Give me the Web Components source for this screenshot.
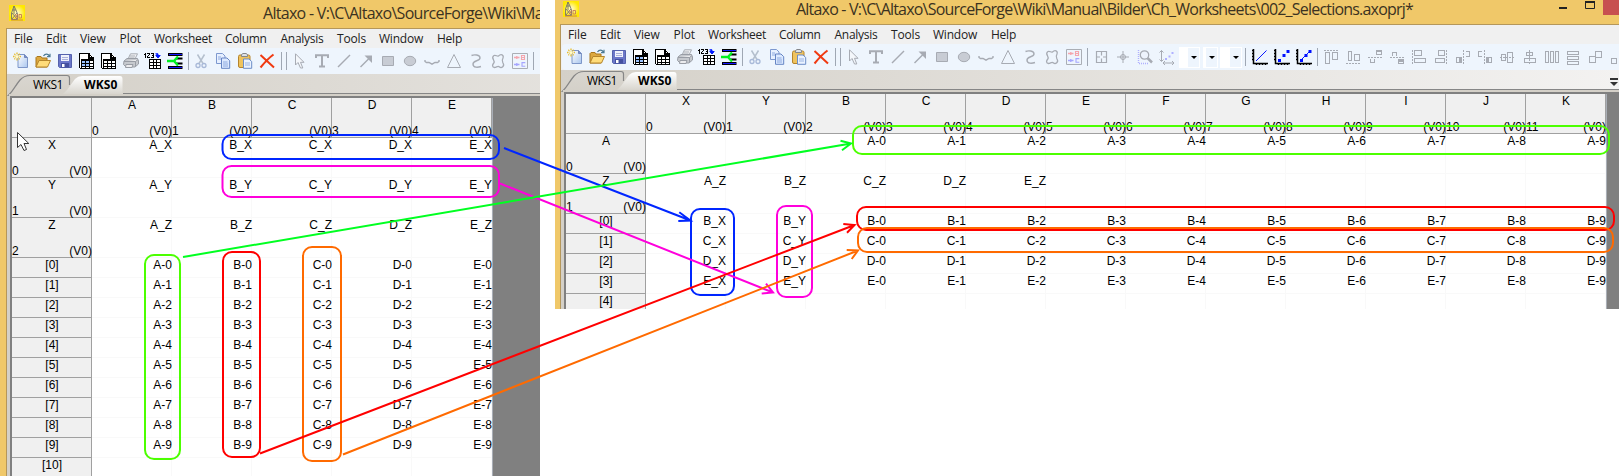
<!DOCTYPE html>
<html lang="en">
<head>
<meta charset="utf-8">
<title>Altaxo worksheets</title>
<style>
html,body{margin:0;padding:0;background:#fff;overflow:hidden}
body{width:1619px;height:476px}
</style>
</head>
<body>
<altaxo-desk></altaxo-desk>
<script>
const define = (name, cls) => customElements.define(name, cls);
const make = (el, html) => { el.attachShadow({mode:'open'}).innerHTML = html; return el.shadowRoot; };

/* Text that is spaced to a given width */
define('fit-text', class extends HTMLElement {
  connectedCallback(){
    if (this.shadowRoot) return;
    make(this, '<style>:host{display:inline-block;white-space:pre}</style><slot></slot>');
    const w = +this.getAttribute('w'), t = this.textContent, cs = getComputedStyle(this);
    const c = document.createElement('canvas').getContext('2d');
    c.font = `${cs.fontWeight} ${cs.fontSize} ${cs.fontFamily}`;
    this.style.letterSpacing = ((w - c.measureText(t).width) / t.length).toFixed(3) + 'px';
    this.style.width = w + 'px';
  }
});

const G = '#a7abb3';
const sheet = (fill) => `<g shape-rendering="crispEdges"><path d="M1 0H10L15 5V16H1Z" fill="#fff"/><path d="M0 0H10V1H1V15H0Z M1 15H15V16H0Z M14 5H15V15H14Z M3 6H14V7H3Z" fill="#000"/><path d="M10 0V5H15M10.5 1.5L14 5" fill="none" stroke="#000" stroke-width="1.2"/><path d="M2 6H15V16H2Z" fill="#000"/><path d="M3 8h3v2h-3z M7 8h3v2h-3z M11 8h3v2h-3z M3 11h3v1.6h-3z M7 11h3v1.6h-3z M11 11h3v1.6h-3z M3 14h3v1.3h-3z M7 14h3v1.3h-3z M11 14h3v1.3h-3z" fill="#fff"/>${fill?'<path d="M3 8h3v2h-3z M7 8h3v2h-3z M3 11h3v2h-3z M7 11h3v2h-3z" fill="#9bc2ff"/>':''}</g>`;
const axes = '<path d="M1.5 0V14.5H16M0 1.5h1M0 4.5h1M0 7.5h1M0 10.5h1M4.5 15v1M7.5 15v1M10.5 15v1M13.5 15v1" fill="none" stroke="#000" stroke-width="1.5"/>';
const ICONS = {
  new: '<defs><linearGradient id="a" x2="1" y2="1"><stop stop-color="#fff"/><stop offset="1" stop-color="#a9c6ef"/></linearGradient></defs><path d="M5 1.5H11.5L14.5 4.5V14.5H5Z" fill="url(#a)" stroke="#7d96c8"/><path d="M11.5 1.5V4.5H14.5" fill="#7a90c8" stroke="#7286bb"/><path d="M4 -.5V7.5M0 3.5H8M1.3.8L6.7 6.2M6.7.8L1.3 6.2" stroke="#e7bd2f" stroke-width="1.3" stroke-dasharray="1.5 .7"/><circle cx="4" cy="3.5" r="1.6" fill="#fffbd0"/>',
  open: '<path d="M1 4.5L2 3.5H6L7 5H12V14H1Z" fill="#dca83f" stroke="#a9771d"/><path d="M1 14L4 7.5H15.5L12.5 14Z" fill="#ffdc7a" stroke="#b5862d"/><path d="M8.5 3C10 .5 13 .5 14.5 3.2M15 .8V3.7H12" fill="none" stroke="#4d7b96" stroke-width="1.2"/>',
  save: '<path d="M1.5 1.5H14.5V14.5H2.5L1.5 13.5Z" fill="#6b77c9" stroke="#5562ad"/><path d="M4 2H12V8H4Z" fill="#f0f2fb"/><path d="M5 4.5H11M5 6.5H11" stroke="#a9b0da"/><path d="M4 10H12V14.5H4Z" fill="#4450a0"/><path d="M5 11H7.5V14H5Z" fill="#fff"/>',
  sheetA: sheet(true), sheetB: sheet(false),
  print: `<path d="M5 6L7.5.8H14.5L12 6M7 3H12M6.3 5H11.5" fill="#f2f3f5" stroke="${G}"/><path d="M1 8L4 5.5H14.5L15.5 8V11L12 14H3L.5 11.5Z" fill="#c6c9ce" stroke="#999da5"/><path d="M1 8.5H12.5L15 6.5M12.5 8.5V13M3 11.5H10L9 14.5H2.5Z" fill="#ececee" stroke="#999da5"/>`,
  num: '<g shape-rendering="crispEdges"><path d="M0 0h1v5h-1zM-1 1h1v1h-1zM2 0h3v1h-3zM4 1h1v1h-1zM3 2h1v1h-1zM2 3h1v2h-1zM3 4h2v1h-2zM6 0h3v1h-3zM8 1h1v3h-1zM7 2h1v1h-1zM6 4h3v1h-3z" fill="#000"/><path d="M4 6H16V16H4Z" fill="#000"/><path d="M5 7h3v2h-3zM9 7h2v2h-2zM12 7h3v2h-3zM5 10h3v2h-3zM9 10h2v2h-2zM12 10h3v2h-3zM5 13h3v2h-3zM9 13h2v2h-2zM12 13h3v2h-3z" fill="#fff"/></g><path d="M10.5 .8H13V3M10.8 2.5H15.2L13 5Z" fill="#0018ff" stroke="#0018ff"/>',
  merge: '<path d="M1 1.5H15.5M1 14.5H15.5" stroke="#000" stroke-width="3"/><path d="M2 1.5H15M2 14.5H15" stroke="#1515ff" stroke-width="1"/><path d="M9 5.5H15.5M9 10.5H15.5" stroke="#000" stroke-width="2"/><path d="M0 8H7L11 3.5M7 8L11 12.5" fill="none" stroke="#00f020" stroke-width="2.4"/>',
  cut: '<path d="M4.5 1.5L10 10.5M11.5 1.5L6 10.5" stroke="#b4bfcd" stroke-width="1.5" fill="none"/><circle cx="5" cy="12.5" r="2" fill="none" stroke="#a8b9d8" stroke-width="1.3"/><circle cx="11" cy="12.5" r="2" fill="none" stroke="#a8b9d8" stroke-width="1.3"/>',
  copy: '<path d="M1.5.5H7.5L10 3V10.5H1.5Z" fill="#e7f0ff" stroke="#7d98cf"/><path d="M6.5 5H12L14.7 7.7V15.3H6.5Z" fill="#dce9ff" stroke="#6685c4"/><path d="M3 4H6M3 6H6M8 9H12.5M8 11H13M8 13H13" stroke="#8eaadf"/>',
  paste: '<rect x="1.5" y="2" width="11.5" height="12.5" rx="1.5" fill="#efc35e" stroke="#b5842c"/><path d="M4.5 3.5V1.5L6 .5H9L10.5 1.5V3.5Z" fill="#dfe2e6" stroke="#85878b"/><path d="M6.5 6H12L14.7 8.5V15.3H6.5Z" fill="#eaf2ff" stroke="#6c8dc7"/><path d="M8 10H13M8 12H13" stroke="#9ab4e2"/>',
  del: '<path d="M1.5 2L15 14.5M14.5 1.5C9 5.5 6 9 1.5 14.5" fill="none" stroke="#f03a12" stroke-width="2"/>',
  arrow: `<path d="M3.5.8V12L6 9.5L8.5 15H10.8L8.5 9.3H12Z" fill="#f4f7fb" stroke="${G}"/>`,
  text: `<path d="M2 5V2.2H14V5M8 2V13.5M5 13.5H11" fill="none" stroke="${G}" stroke-width="2"/>`,
  line: `<path d="M2 14L14 2" stroke="${G}" stroke-width="1.5"/>`,
  larrow: `<path d="M2.5 14L12 4.5" stroke="${G}" stroke-width="1.5"/><path d="M6.5 2.5H14V10Z" fill="${G}"/>`,
  rect: `<path d="M2.5 3.5H13.5V12.5H2.5Z" fill="#c8ccd4" stroke="${G}"/>`,
  oval: `<ellipse cx="8" cy="8" rx="5.7" ry="4.7" fill="#c8ccd4" stroke="${G}"/>`,
  wave: `<path d="M1 7V8.5L2.5 9.5H5L8 11.2L11 9.5H13.5L15 8.5V7" fill="none" stroke="${G}" stroke-width="1.4"/>`,
  tri: `<path d="M8 1.5L14.5 14.5H1.5Z" fill="none" stroke="${G}"/>`,
  curve: `<path d="M3.5 2.5C6 1.5 12 1.5 12 5C12 8.5 5 7 5 11C5 15 10 14.5 13 13.5" fill="none" stroke="${G}" stroke-width="1.4"/>`,
  blob: `<path d="M4 2.5C6 1.5 7 4 8.5 3C11 .5 14 2 13 5C11.5 7.5 12 8 13 10C15 13 11.5 15.5 9.5 14C8 12 6.5 14.5 4.5 14.5C1.5 14 2.5 11.5 3.8 10C5.8 7.5 0 5 4 2.5Z" fill="none" stroke="${G}" stroke-width="1.3"/>`,
  bc: '<path d="M.5.5H15.5V15.5H.5Z" fill="none" stroke="#aaaeb5"/><path d="M2 4.5H7.5M4.8 3V6" stroke="#f5a5ad" stroke-width="1.3"/><path d="M2 11.5H7.5M4.8 10V13" stroke="#a5a5ff" stroke-width="1.3"/><path d="M9.5 2.5H12.5V6.5H9.5ZM9.5 4.5H13" fill="none" stroke="#f5a5ad" stroke-width="1.1"/><path d="M13.3 9.6H10V13.3H13.3" fill="none" stroke="#a5a5ff" stroke-width="1.1"/>',
  target: `<path d="M3.5 2.5H13.5V13.5H3.5ZM8.5 3V6.5M8.5 9.5V13M4 8H7M10 8H13" fill="none" stroke="${G}" stroke-width="1.2"/>`,
  cross: `<path d="M8 2V14M2 8H14M5.5 8A2.5 2.5 0 1 0 10.5 8A2.5 2.5 0 1 0 5.5 8" fill="none" stroke="${G}"/>`,
  mag: `<path d="M1.5 1V14.5H12" fill="none" stroke="#b0b0ff" stroke-width="1.4" stroke-dasharray="1 1"/><circle cx="7.5" cy="6" r="4.2" fill="#eef4fd" stroke="${G}" stroke-width="1.3"/><path d="M10.5 9L15 13.5" stroke="${G}" stroke-width="2.5"/>`,
  scale: `<path d="M2.5 1.5V12M.5 3.5L2.5 1.5L4.5 3.5M.5 10.5L2.5 12.5L4.5 10.5M4 14H15M6 12L4 14L6 16M13 12L15 14L13 16" fill="none" stroke="${G}"/><path d="M6 9h2v2h-2zM9.5 6.5h2v2h-2zM12.5 3h2v2h-2z" fill="#b0b0ff"/>`,
  plotL: axes + '<path d="M4 12L14.5 1.5" stroke="#0a18ff"/>',
  plotP: axes + '<path d="M4 10h3v3h-3zM8.5 5h3v3h-3zM12.5 1h3v3h-3z" fill="#0010ff"/>',
  plotB: axes + '<path d="M4 12L14.5 1.5" stroke="#0a18ff"/><path d="M4 10h3v3h-3zM8.5 5h3v3h-3zM12.5 1h3v3h-3z" fill="#0010ff"/>'
};
const L = (d, fill='') => `<g shape-rendering="crispEdges"><path d="${d}" fill="none" stroke="${G}"/>${fill}</g>`;
const D = (d) => `<path d="${d}" fill="none" stroke="${G}" stroke-dasharray="2 1"/>`;
const F = (d) => `<path d="${d}" fill="${G}"/>`;
Object.assign(ICONS, {
  al1: L('M2.5 3.5H6.5V14.5H2.5ZM9.5 3.5H14.5V10.5H9.5Z', D('M1 1.5H15')),
  al2: L('M3.5 2.5H6.5V11.5H3.5ZM9.5 5.5H14.5V11.5H9.5Z', D('M1 14.5H15')),
  al3: L('M9.5 1.5H14.5V5.5H9.5ZM3.5 10V13.5H7.5V10', D('M1 8.5H15') + F('M10 1h4v2h-4z')),
  al4: L('M3.5 7V3.5H7.5V7M9.5 10.5H14.5V14.5H9.5Z', D('M1 8.5H15') + F('M10 10h4v3h-4z')),
  al5: L('M3.5 1.5H10.5V6.5H3.5ZM3.5 9.5H14.5V13.5H3.5Z', D('M1.5 1V15')),
  al6: L('M5.5 1.5H11.5V6.5H5.5ZM2.5 9.5H11.5V13.5H2.5Z', D('M13.5 1V15')),
  al7: L('M1.5 8.5H6.5V13.5H1.5ZM11 2.5H14.5V7.5H11', D('M8.5 1V15') + F('M4 9h3v4h-3z')),
  al8: L('M9.5 8.5H14.5V13.5H9.5ZM5 2.5H1.5V7.5H5', D('M7.5 1V15') + F('M10 9h2v4h-2z')),
  al9: L('M2.5 5.5H6.5V11.5H2.5ZM8.5 3.5H13.5V13.5H8.5Z', D('M1 8.5H16')),
  al10: L('M5.5 3.5H11.5V6.5H5.5ZM3.5 9.5H14.5V13.5H3.5Z', D('M8.5 1V15')),
  al11: L('M2.5 2.5H5.5V13.5H2.5ZM7.5 2.5H10.5V13.5H7.5ZM12.5 2.5H15.5V13.5H12.5Z'),
  al12: L('M2.5 2.5H13.5V5.5H2.5ZM2.5 7.5H13.5V10.5H2.5ZM2.5 12.5H13.5V15.5H2.5Z'),
  al13: L('M8.5 2.5H14.5V8.5H8.5ZM2.5 7.5H8.5V13.5H2.5Z'),
  al14: L('M2.5 9.5H7.5V14.5H2.5ZM9.5 3.5H15V8.5H9.5')
});

define('tool-icon', class extends HTMLElement {
  connectedCallback(){
    if (this.shadowRoot) return;
    make(this, `<style>:host{display:flex;flex:0 0 22px;justify-content:center;align-items:center}svg{display:block;overflow:visible}</style><svg width="16" height="16" viewBox="0 0 16 16">${ICONS[this.getAttribute('name')]}</svg>`);
  }
});
define('tool-sep', class extends HTMLElement {
  connectedCallback(){
    if (this.shadowRoot) return;
    make(this, `<style>:host{display:flex;flex:none;justify-content:center;gap:4px;align-items:center}i{width:1px;height:18px;background:#9fa7b3}</style>${this.hasAttribute('double')?'<i></i><i></i>':'<i></i>'}`);
  }
});
define('tool-combo', class extends HTMLElement {
  connectedCallback(){
    if (this.shadowRoot) return;
    make(this, `<style>:host{display:flex;flex:none;height:21px;box-sizing:border-box;background:#fff;justify-content:flex-end;padding:1px}
      div{width:${this.getAttribute('b')}px;background:#eef5fd;display:flex;align-items:center;justify-content:center}
      i{border:3px solid transparent;border-top-color:#000;border-bottom:0}</style><div><i></i></div>`);
  }
});

define('tool-bar', class extends HTMLElement {
  connectedCallback(){
    if (this.shadowRoot) return;
    const ic = (s) => s.split(' ').map(n => `<tool-icon name="${n}"></tool-icon>`).join('');
    const sep = (w, d='') => `<tool-sep style="width:${w}px" ${d}></tool-sep>`;
    let h = ic('new open save sheetA sheetB print num merge') + sep(4) + ic('cut copy paste del') + sep(11,'double') +
      ic('arrow text line larrow rect oval wave tri curve blob bc') + sep(5);
    if (this.hasAttribute('full')) h += ic('target cross mag scale') +
      '<tool-combo b="11" style="width:21px;margin-left:1px"></tool-combo><tool-combo b="11" style="width:15px;margin-left:3px"></tool-combo><tool-combo b="11" style="width:22px;margin-left:2px"></tool-combo>' +
      sep(7) + ic('plotL plotP plotB') + sep(5) + ic('al1 al2 al3 al4 al5 al6 al7 al8 al9 al10 al11 al12 al13 al14');
    make(this, `<style>:host{display:flex;height:26px;margin-left:1px;padding-left:2px;align-items:center;background:#eef5fd;border-radius:4px 0 0 4px;overflow:hidden;box-sizing:border-box}tool-icon,tool-sep{height:24px;margin-top:-1px}</style>${h}`);
  }
});

define('menu-bar', class extends HTMLElement {
  connectedCallback(){
    if (this.shadowRoot) return;
    const items = [['File',18.5,13.5],['Edit',20.5,13.5],['View',25.5,14],['Plot',21.5,13],['Worksheet',58,13],['Column',41.5,14],['Analysis',43,13.5],['Tools',29,13],['Window',44,14],['Help',25,0]];
    make(this, `<style>:host{display:flex;height:19px;padding-left:7px;font:12px/20px "Open Sans","Noto Sans",sans-serif;color:#222}</style>` +
      items.map(([t,w,g]) => `<fit-text w="${w}" style="margin-right:${g}px">${t}</fit-text>`).join(''));
  }
});

define('sheet-tabs', class extends HTMLElement {
  connectedCallback(){
    if (this.shadowRoot) return;
    make(this, `<style>
      :host{display:grid;height:22px;background:linear-gradient(90deg,#d4d0c8,#f3f2f1 1060px);font:12px/20px "Open Sans","Noto Sans",sans-serif;color:#000}
      svg,div{grid-area:1/1}
      svg{display:block}
      div{display:flex;align-items:center;padding:0 0 1px 26px;gap:21px}
      b{font-weight:700}
      .end{margin-left:auto}
      .end svg{margin-top:3px}
    </style>
    <svg width="100%" height="22"><defs><linearGradient id="g" x1="0" y1="0" x2="0" y2="1"><stop stop-color="#fff"/><stop offset="1" stop-color="#d8d5ce"/></linearGradient>
      <linearGradient id="h" x1="0" y1="0" x2="0" y2="1"><stop stop-color="#d9d6d0"/><stop offset="1" stop-color="#d4d0c8"/></linearGradient></defs>
      <path d="M1 22C5 19 8 12 13 6Q17 1.5 23 1.5H60Q62.5 1.5 62.5 4V19H64V20" fill="url(#h)"/>
      <path d="M.5 22C5 19 8 12 13 6Q17 1.5 23 1.5H60Q62.5 1.5 62.5 4V11" fill="none" stroke="#868686" stroke-width="1.2"/>
      <path d="M60 16L68 5Q71 2 75 2H113Q115.5 2 115.5 5V20H56Z" fill="url(#g)"/>
      <path d="M116 19.5H1200" stroke="#868686"/><path d="M2 20H1200V22H2Z" fill="#d4d0c8"/></svg>
    <div><fit-text w="30">WKS1</fit-text><b><fit-text w="33.5">WKS0</fit-text></b>${this.hasAttribute('full')?'<span class="end"><svg width="10" height="10"><path d="M1 1H9V3H1Z M1 5H9L5 9Z" fill="#333"/></svg></span>':''}</div>`);
  }
});

/* Worksheet grid: property columns, property rows, data rows */
const seq = (p, n) => Array.from({length:n}, (_, i) => p(i));
const SHEETS = {
  source: {
    cols: [...'ABCDE'],
    rows: [...seq(i => ({h:'XYZ'[i], n:i, v:[...'ABCDE'].map(c => c + '_' + 'XYZ'[i])}), 3),
           ...seq(i => ({h:`[${i}]`, v:[...'ABCDE'].map(c => `${c}-${i}`)}), 10), {h:'[10]', v:[]}]
  },
  result: {
    cols: [...'XYBCDEFGHIJK'],
    rows: [{h:'A', n:0, v:['','', ...seq(i => 'A-' + i, 10)]},
           {h:'Z', n:1, v:[...'ABCDE'].map(c => c + '_Z')},
           ...seq(r => { const c = 'BCDE'[r]; return {h:`[${r}]`, v:[c+'_X', c+'_Y', ...seq(i => `${c}-${i}`, 10)]}; }, 4), {h:'[4]', v:[]}]
  }
};
define('work-sheet', class extends HTMLElement {
  connectedCallback(){
    if (this.shadowRoot) return;
    const {cols, rows} = SHEETS[this.getAttribute('data')];
    const head = (t, n) => `<div class="h ${n === undefined ? 's' : ''}"><span>${t}</span>${n === undefined ? '' : `<p><span>${n}</span><span>(V0)</span></p>`}</div>`;
    let h = '<div class="h"></div>' + cols.map((c, i) => head(c, i)).join('');
    for (const r of rows) h += head(r.h, r.n) + cols.map((_, i) => `<div class="c">${r.v[i] || ''}</div>`).join('');
    make(this, `<style>
      :host{display:flex;flex:1;background:#808080;border:solid #808080;border-width:2px 0 0 2px;margin-left:3px;box-shadow:-3px 0 0 #d4d0c8;font:12px/14px "Liberation Sans",Arial,sans-serif;color:#000;overflow:hidden}
      main{display:grid;grid-template-columns:repeat(${cols.length + 1},80px);grid-template-rows:40px;grid-auto-rows:max-content;border-right:1px solid #a9aeb6;background:#fff;align-self:stretch}
      .h{height:40px;box-sizing:border-box;background:#f0f0f0;box-shadow:inset -1px -1px #a0a0a0;display:flex;flex-direction:column;justify-content:space-between;text-align:center}
      .s{height:20px}
      p{display:flex;justify-content:space-between;margin:0}
      .c{text-align:right;box-shadow:inset -1px -1px #f9f9f9}
    </style><main>${h}</main>`);
  }
});

define('app-window', class extends HTMLElement {
  connectedCallback(){
    if (this.shadowRoot) return;
    const full = this.hasAttribute('full') ? 'full' : '';
    make(this, `<style>
      :host{display:flex;flex-direction:column;box-sizing:border-box;background:#f0c869;padding-left:6px;overflow:hidden}
      header{height:28px;flex:none;display:flex;font:16px/19px "Open Sans","Noto Sans",sans-serif;color:#3b3221}
      header>svg{margin:5px 0 0 3px;flex:none}
      fit-text{margin:4px 0 0 ${full ? 217 : 238}px;flex:none}
      section{flex:1;display:flex;flex-direction:column;background:#f0f0f0;border:solid #b5975a;border-width:1px 0 0 1px;min-height:0}
      menu-bar,tool-bar,sheet-tabs{flex:none}
    </style>
    <header><svg width="16" height="16"><defs><radialGradient id="y"><stop stop-color="#fffde0"/><stop offset="1" stop-color="#ffe800"/></radialGradient></defs><rect width="16" height="16" fill="url(#y)"/>
      <path d="M2.5 14.5V8L5 1L7 5L8.5 9V14.5ZM3 8L8 14M8 8L3 14M3.5 5H7M5 1V9" fill="none" stroke="#77756a" stroke-width=".9"/><path d="M6 9L9 13.5M9 9L6 13.5M10 9.5H12.5V13H10ZM2 15H14" fill="none" stroke="#c77a55" stroke-width=".9"/></svg>
      ${full ? '<fit-text w="617">Altaxo - V:\\C\\Altaxo\\SourceForge\\Wiki\\Manual\\Bilder\\Ch_Worksheets\\002_Selections.axoprj*</fit-text>'
             : '<fit-text w="280">Altaxo - V:\\C\\Altaxo\\SourceForge\\Wiki\\Ma</fit-text>'}
      ${full ? '<svg style="margin:0 0 0 auto" width="61" height="20"><path d="M1 11H9V13H1Z" fill="#222"/><path d="M27.5 6.5H36.5V12.5H27.5ZM27 6H37" fill="none" stroke="#222"/><path d="M27 5H37V7H27Z" fill="#222"/><path d="M45 0H61V19H45Z" fill="#c75050"/></svg>' : ''}
    </header>
    <section><menu-bar></menu-bar><tool-bar ${full}></tool-bar><sheet-tabs ${full}></sheet-tabs><work-sheet data="${this.getAttribute('data')}"></work-sheet></section>`);
  }
});

/* Frames and arrows drawn over both windows */
define('mark-layer', class extends HTMLElement {
  connectedCallback(){
    if (this.shadowRoot) return;
    const box = (x1,y1,x2,y2,c) => `<rect x="${x1}" y="${y1}" width="${x2-x1}" height="${y2-y1}" rx="9" stroke="${c}"/>`;
    const arr = (d,c) => `<path d="${d}" stroke="${c}"/>`;
    const B='#0026ff', M='#ff00dc', N='#4cff00', R='#ff0000', O='#ff6a00', E='#00ff21';
    make(this, `<style>:host{position:absolute;left:0;top:0;pointer-events:none}svg{display:block}</style>
    <svg width="1619" height="476" fill="none" stroke-width="2">
    ${box(222.5,135,499,159,B)}${box(222.5,166,499,197,M)}${box(145,255,180,459,N)}${box(223,252,260,457,R)}${box(303,247,341,461,O)}
    ${box(853,126,1609,154,N)}${box(857,207,1614,230,R)}${box(858,228,1613,252,O)}${box(691,209,734,295,B)}${box(777,206,812,297,M)}
    ${arr('M504 148L690.5 220.5M679.3 212.3L690.5 220.5L678.3 221',B)}
    ${arr('M500 183.5L773 292.5M766 283.7L773 292.5L761.7 293.5',M)}
    ${arr('M183 257L851 143.5M840.5 140.7L851 143.5L842 150.3',E)}
    ${arr('M260 453.5L854.5 225M843.3 224L854.5 225L847 232.7',R)}
    ${arr('M343 454.5L858 250.5M846.7 250L858 250.5L851.7 259',O)}
    <path d="M17.5 132.5V147.5L21 144.5L24 150.5L26.5 149.5L24 143.5H28.8Z" fill="#fff" stroke="#333" stroke-width="1"/>
    </svg>`);
  }
});

define('altaxo-desk', class extends HTMLElement {
  connectedCallback(){
    if (this.shadowRoot) return;
    make(this, `<style>
      :host{display:flex;position:relative;width:1619px;height:476px;overflow:hidden;background:#fff;align-items:flex-start}
      .l{width:540px;height:476px;overflow:hidden;flex:none}
      .r{width:1064px;height:309px;margin-left:15px;overflow:hidden;flex:none}
      .l app-window{width:540px;height:476px}
      .r app-window{width:1065px;height:313px;margin:-4px 0 0 -1px}
    </style>
    <div class="l"><app-window data="source"></app-window></div>
    <div class="r"><app-window data="result" full></app-window></div>
    <mark-layer></mark-layer>`);
  }
});
</script>
</body>
</html>
